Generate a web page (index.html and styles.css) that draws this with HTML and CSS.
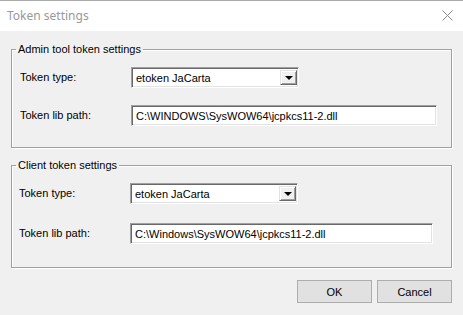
FILE: index.html
```html
<!DOCTYPE html>
<html lang="en">
<head>
  <meta charset="utf-8" />
  <title>Token settings</title>
  <link rel="stylesheet" href="styles.css">
</head>
<body>

  <div class="titlebar">
    <span class="title">Token settings</span>
    <span class="close" title="Close">
      <svg width="11" height="11" viewBox="0 0 11 11"><path d="M0.5 0.5L10.5 10.5M10.5 0.5L0.5 10.5" stroke="#8a8a8a" stroke-width="1" fill="none"/></svg>
    </span>
  </div>

  <div class="content">

    <!-- Admin tool -->
    <fieldset class="group group-admin">
      <legend>Admin tool token settings</legend>
      <div class="rows">
        <label>Token type:</label>
        <div class="combo">
          <span class="combo-text">etoken JaCarta</span>
          <span class="combo-btn"><i class="arrow"></i></span>
        </div>
        <label>Token lib path:</label>
        <input class="path" type="text" value="C:\WINDOWS\SysWOW64\jcpkcs11-2.dll">
      </div>
    </fieldset>

    <!-- Client -->
    <fieldset class="group group-client">
      <legend>Client token settings</legend>
      <div class="rows">
        <label>Token type:</label>
        <div class="combo">
          <span class="combo-text">etoken JaCarta</span>
          <span class="combo-btn"><i class="arrow"></i></span>
        </div>
        <label>Token lib path:</label>
        <input class="path" type="text" value="C:\Windows\SysWOW64\jcpkcs11-2.dll">
      </div>
    </fieldset>

    <div class="buttons">
      <button>OK</button>
      <button>Cancel</button>
    </div>
  </div>

</body>
</html>
```

FILE: styles.css
```css
:root {
  --face:    #f0f0f0;
  --light:   #e3e3e3;
  --shadow:  #a0a0a0;
  --dark:    #696969;
  --text:    #000;
}
*, *::before, *::after { box-sizing: border-box; margin:0; padding:0; }
html, body { height:100%; }
body {
  font-family: "Liberation Sans", Arial, sans-serif;
  font-size: 11px;
  color: var(--text);
  background: var(--face);
  overflow: hidden;
}

/* title bar */
.titlebar {
  height:31px;background:#fff;
  border-top:1px solid #aaa;
  display:flex;align-items:center;justify-content:space-between;
  padding:0 10px 1px 7px;
}
.title {
  font-family:"Noto Sans","Open Sans",sans-serif;
  font-size:12px;color:#999;
}
.close { display:flex;margin-top:-1px; }

.content { padding:12px 11px 0; }

/* group boxes */
.group {
  border:1px solid var(--shadow);
  box-shadow:1px 1px 0 #fff, inset 1px 1px 0 #fff;
  margin:0;padding:0;min-width:0;
}
.group legend {
  margin-left:4px;padding:0 2px;
  line-height:13px;
}
.rows {
  display:grid;
  grid-template-columns:111px 1fr;
  align-items:center;
  padding:11px 14px 21px 8px;
}
.group-admin .rows { row-gap:17px;padding-right:14px; }
.group-client { margin-top:11px; }
.group-client .rows { row-gap:19px;padding-top:11px;padding-bottom:23px;padding-right:17px; }
.group-client .rows label,
.group-client .combo,
.group-client .path { position:relative;left:-1px; }

label { line-height:13px; }

/* sunken fields */
.combo, .path {
  height:21px;background:#fff;
  border:1px solid;
  border-color:var(--shadow) #fff #fff var(--shadow);
  box-shadow:inset 1px 1px 0 var(--dark), inset -1px -1px 0 var(--light);
}
.combo {
  width:168px;
  display:flex;align-items:stretch;
  padding:2px 1px 2px 2px;
}
.combo-text { flex:1;padding-left:2px;line-height:16px; }
.combo-btn {
  width:17px;background:var(--face);
  border:1px solid;
  border-color:var(--light) var(--dark) var(--dark) var(--light);
  box-shadow:inset 1px 1px 0 #fff, inset -1px -1px 0 var(--shadow);
  display:flex;align-items:center;justify-content:center;
}
.arrow {
  width:0;height:0;margin-top:1px;
  border-left:4px solid transparent;border-right:4px solid transparent;
  border-top:4px solid #000;
}
.path {
  width:100%;
  font-family:inherit;font-size:11px;color:var(--text);
  padding:0 4px;outline:none;
}

/* dialog buttons */
.buttons {
  display:flex;justify-content:flex-end;gap:5px;
  margin-top:12px;
}
.buttons button {
  width:75px;height:23px;
  font-family:inherit;font-size:11px;color:var(--text);
  background:#e1e1e1;border:1px solid #adadad;
}
```
